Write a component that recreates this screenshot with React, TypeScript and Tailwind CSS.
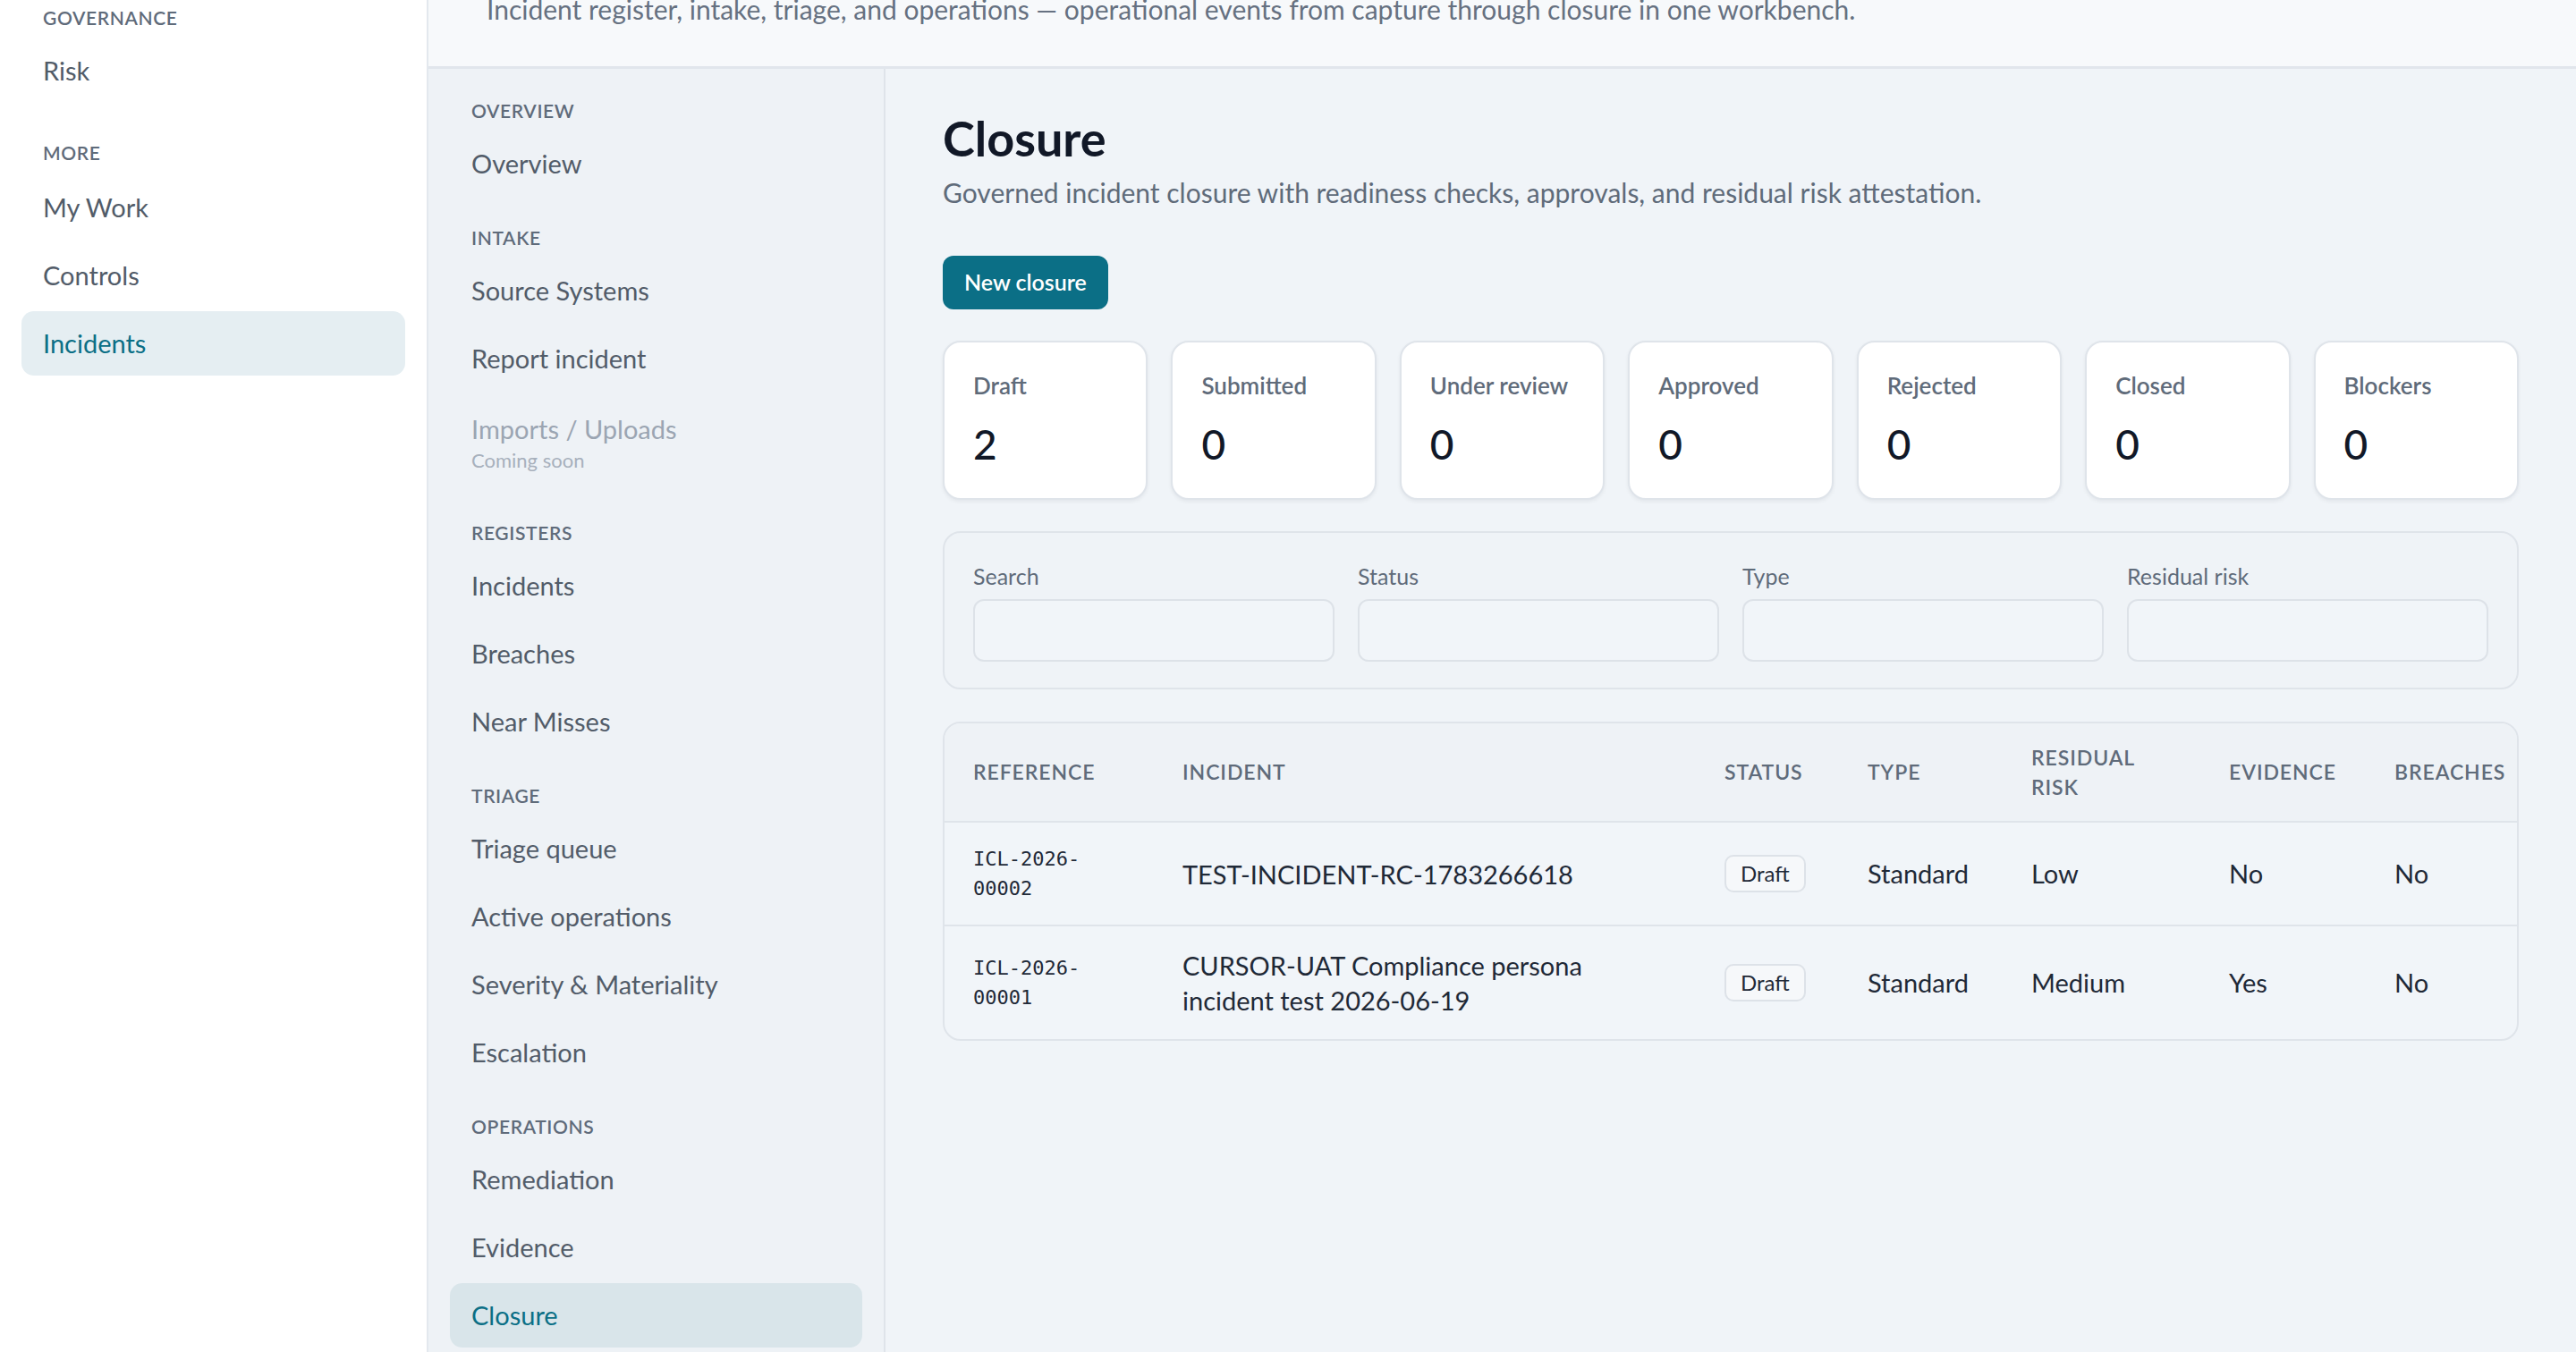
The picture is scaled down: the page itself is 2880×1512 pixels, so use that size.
import React from "react";

const font = { fontFamily: "Lato, 'Liberation Sans', sans-serif" };

type NavItem = { label: string; sub?: string; muted?: boolean; active?: boolean };
type NavSection = { title: string; items: NavItem[] };

const sections: NavSection[] = [
  { title: "Overview", items: [{ label: "Overview" }] },
  {
    title: "Intake",
    items: [
      { label: "Source Systems" },
      { label: "Report incident" },
      { label: "Imports / Uploads", sub: "Coming soon", muted: true },
    ],
  },
  { title: "Registers", items: [{ label: "Incidents" }, { label: "Breaches" }, { label: "Near Misses" }] },
  {
    title: "Triage",
    items: [
      { label: "Triage queue" },
      { label: "Active operations" },
      { label: "Severity & Materiality" },
      { label: "Escalation" },
    ],
  },
  {
    title: "Operations",
    items: [{ label: "Remediation" }, { label: "Evidence" }, { label: "Closure", active: true }],
  },
];

const stats = [
  { label: "Draft", value: 2 },
  { label: "Submitted", value: 0 },
  { label: "Under review", value: 0 },
  { label: "Approved", value: 0 },
  { label: "Rejected", value: 0 },
  { label: "Closed", value: 0 },
  { label: "Blockers", value: 0 },
];

const rows = [
  {
    ref: ["ICL-2026-", "00002"],
    incident: "TEST-INCIDENT-RC-1783266618",
    status: "Draft",
    type: "Standard",
    risk: "Low",
    evidence: "No",
    breaches: "No",
  },
  {
    ref: ["ICL-2026-", "00001"],
    incident: "CURSOR-UAT Compliance persona incident test 2026-06-19",
    status: "Draft",
    type: "Standard",
    risk: "Medium",
    evidence: "Yes",
    breaches: "No",
  },
];

function SectionLabel({ children }: { children: React.ReactNode }) {
  return (
    <div className="h-[30px] leading-[30px] text-[21px] font-semibold uppercase tracking-[0.03em] text-[#5f6b7a]">
      {children}
    </div>
  );
}

function SideLink({ label, active }: { label: string; active?: boolean }) {
  return (
    <div
      className={
        active
          ? "flex h-[72px] items-center rounded-[14px] bg-[#e5eef2] pl-6 text-[29px] text-[#0b6f86]"
          : "flex h-[72px] items-center rounded-[14px] pl-6 text-[29px] text-[#525c69]"
      }
    >
      {label}
    </div>
  );
}

export default function App() {
  return (
    <div className="flex h-[1512px] w-[2880px] overflow-hidden bg-[#f0f4f8]" style={font}>
      {/* App sidebar */}
      <aside className="flex w-[479px] shrink-0 flex-col border-r-2 border-[#e3e8ee] bg-white px-6 pt-[5px]">
        <div className="pl-6">
          <SectionLabel>Governance</SectionLabel>
        </div>
        <div className="mt-2 flex flex-col gap-1">
          <SideLink label="Risk" />
        </div>
        <div className="mt-[41px] pl-6">
          <SectionLabel>More</SectionLabel>
        </div>
        <div className="mt-[10px] flex flex-col gap-1">
          <SideLink label="My Work" />
          <SideLink label="Controls" />
          <SideLink label="Incidents" active />
        </div>
      </aside>

      <div className="flex min-w-0 flex-1 flex-col">
        {/* Module header (page is scrolled, title sits above the fold) */}
        <header className="h-[77px] shrink-0 overflow-hidden border-b-[3px] border-[#e1e6ec] bg-[#f7f9fb] pl-[65px]">
          <p className="-mt-[8px] text-[30px] leading-[36px] text-[#667181]">
            Incident register, intake, triage, and operations — operational events from capture through closure in one workbench.
          </p>
        </header>

        <div className="flex min-h-0 flex-1">
          {/* Module nav */}
          <nav className="flex w-[511px] shrink-0 flex-col border-r-2 border-[#dfe4ea] bg-[#eef2f6] px-6 pt-8">
            {sections.map((s, i) => (
              <div key={s.title} className={i === 0 ? "" : "mt-8"}>
                <div className="pl-6">
                  <SectionLabel>{s.title}</SectionLabel>
                </div>
                <div className="mt-2 flex flex-col gap-1">
                  {s.items.map((it) =>
                    it.sub ? (
                      <div key={it.label} className="flex flex-col py-[22px] pl-6">
                        <span className="text-[29px] leading-[34px] text-[#9ba5b2]">{it.label}</span>
                        <span className="mt-[6px] text-[22px] leading-[24px] text-[#a7b0bc]">{it.sub}</span>
                      </div>
                    ) : (
                      <div
                        key={it.label}
                        className={
                          it.active
                            ? "flex h-[72px] items-center rounded-[14px] bg-[#d9e5ea] pl-6 text-[29px] text-[#0b6f86]"
                            : "flex h-[72px] items-center rounded-[14px] pl-6 text-[29px] text-[#525c69]"
                        }
                      >
                        {it.label}
                      </div>
                    )
                  )}
                </div>
              </div>
            ))}
          </nav>

          {/* Main */}
          <main className="min-w-0 flex-1 bg-[#f0f4f8] px-[64px] pt-[48px]">
            <h1 className="text-[54px] font-bold leading-[60px] text-[#111827]">Closure</h1>
            <p className="mt-[12px] text-[30px] leading-[36px] text-[#5f6b7a]">
              Governed incident closure with readiness checks, approvals, and residual risk attestation.
            </p>
            <button className="mt-[53px] h-[60px] rounded-[12px] bg-[#0b6f86] px-[24px] text-[25px] font-semibold text-white">
              New closure
            </button>

            {/* Stats */}
            <div className="mt-[35px] grid grid-cols-7 gap-[26px]">
              {stats.map((s) => (
                <div
                  key={s.label}
                  className="h-[178px] rounded-[20px] border-2 border-[#dfe4ea] bg-white pl-8 pt-[30px] shadow-[0_2px_4px_rgba(15,23,42,0.06)]"
                >
                  <div className="text-[26px] font-semibold leading-[36px] text-[#5f6b7a]">{s.label}</div>
                  <div className="mt-[20px] text-[46px] font-medium leading-[56px] text-[#111827]">{s.value}</div>
                </div>
              ))}
            </div>

            {/* Filters */}
            <div className="mt-[35px] grid h-[177px] grid-cols-4 gap-[26px] rounded-[20px] border-2 border-[#dfe4ea] bg-[#eff3f7] px-8 pt-[32px]">
              {["Search", "Status", "Type", "Residual risk"].map((f) => (
                <div key={f} className="flex flex-col">
                  <label className="text-[25px] leading-[32px] text-[#5f6b7a]">{f}</label>
                  <div className="mt-[10px] h-[70px] rounded-[12px] border-2 border-[#dde2e8] bg-[#f1f5f9]" />
                </div>
              ))}
            </div>

            {/* Table */}
            <div className="mt-[36px] overflow-hidden rounded-[20px] border-2 border-[#dfe4ea] bg-[#f1f5f9]">
              <table className="w-max table-fixed border-collapse text-left">
                <colgroup>
                  <col className="w-[234px]" />
                  <col className="w-[606px]" />
                  <col className="w-[160px]" />
                  <col className="w-[183px]" />
                  <col className="w-[221px]" />
                  <col className="w-[185px]" />
                  <col className="w-[200px]" />
                </colgroup>
                <thead>
                  <tr className="h-[110px] border-b-2 border-[#dfe4ea] bg-[#eef2f6]">
                    {["Reference", "Incident", "Status", "Type", "Residual risk", "Evidence", "Breaches"].map((h) => (
                      <th
                        key={h}
                        className="px-8 align-middle text-[23px] font-semibold uppercase leading-[33px] tracking-[0.04em] text-[#5f6b7a]"
                      >
                        {h === "Residual risk" ? (
                          <>
                            Residual
                            <br />
                            Risk
                          </>
                        ) : (
                          h
                        )}
                      </th>
                    ))}
                  </tr>
                </thead>
                <tbody>
                  {rows.map((r, i) => (
                    <tr key={r.ref[1]} className={i === 0 ? "border-b-2 border-[#dfe4ea]" : ""}>
                      <td className="px-8 py-6 align-middle text-[22px] leading-[33px] text-[#1f2937]" style={{ fontFamily: "'DejaVu Sans Mono', monospace" }}>
                        {r.ref[0]}
                        <br />
                        {r.ref[1]}
                      </td>
                      <td className="px-8 py-6 align-middle text-[29px] leading-[39px] text-[#1f2937]">{r.incident}</td>
                      <td className="px-8 py-6 align-middle">
                        <span className="inline-flex h-[42px] items-center rounded-[10px] border-2 border-[#dde2e8] bg-[#f6f8fa] px-[16px] text-[24px] text-[#1f2937]">
                          {r.status}
                        </span>
                      </td>
                      <td className="px-8 py-6 align-middle text-[29px] text-[#1f2937]">{r.type}</td>
                      <td className="px-8 py-6 align-middle text-[29px] text-[#1f2937]">{r.risk}</td>
                      <td className="px-8 py-6 align-middle text-[29px] text-[#1f2937]">{r.evidence}</td>
                      <td className="px-8 py-6 align-middle text-[29px] text-[#1f2937]">{r.breaches}</td>
                    </tr>
                  ))}
                </tbody>
              </table>
            </div>
          </main>
        </div>
      </div>
    </div>
  );
}
